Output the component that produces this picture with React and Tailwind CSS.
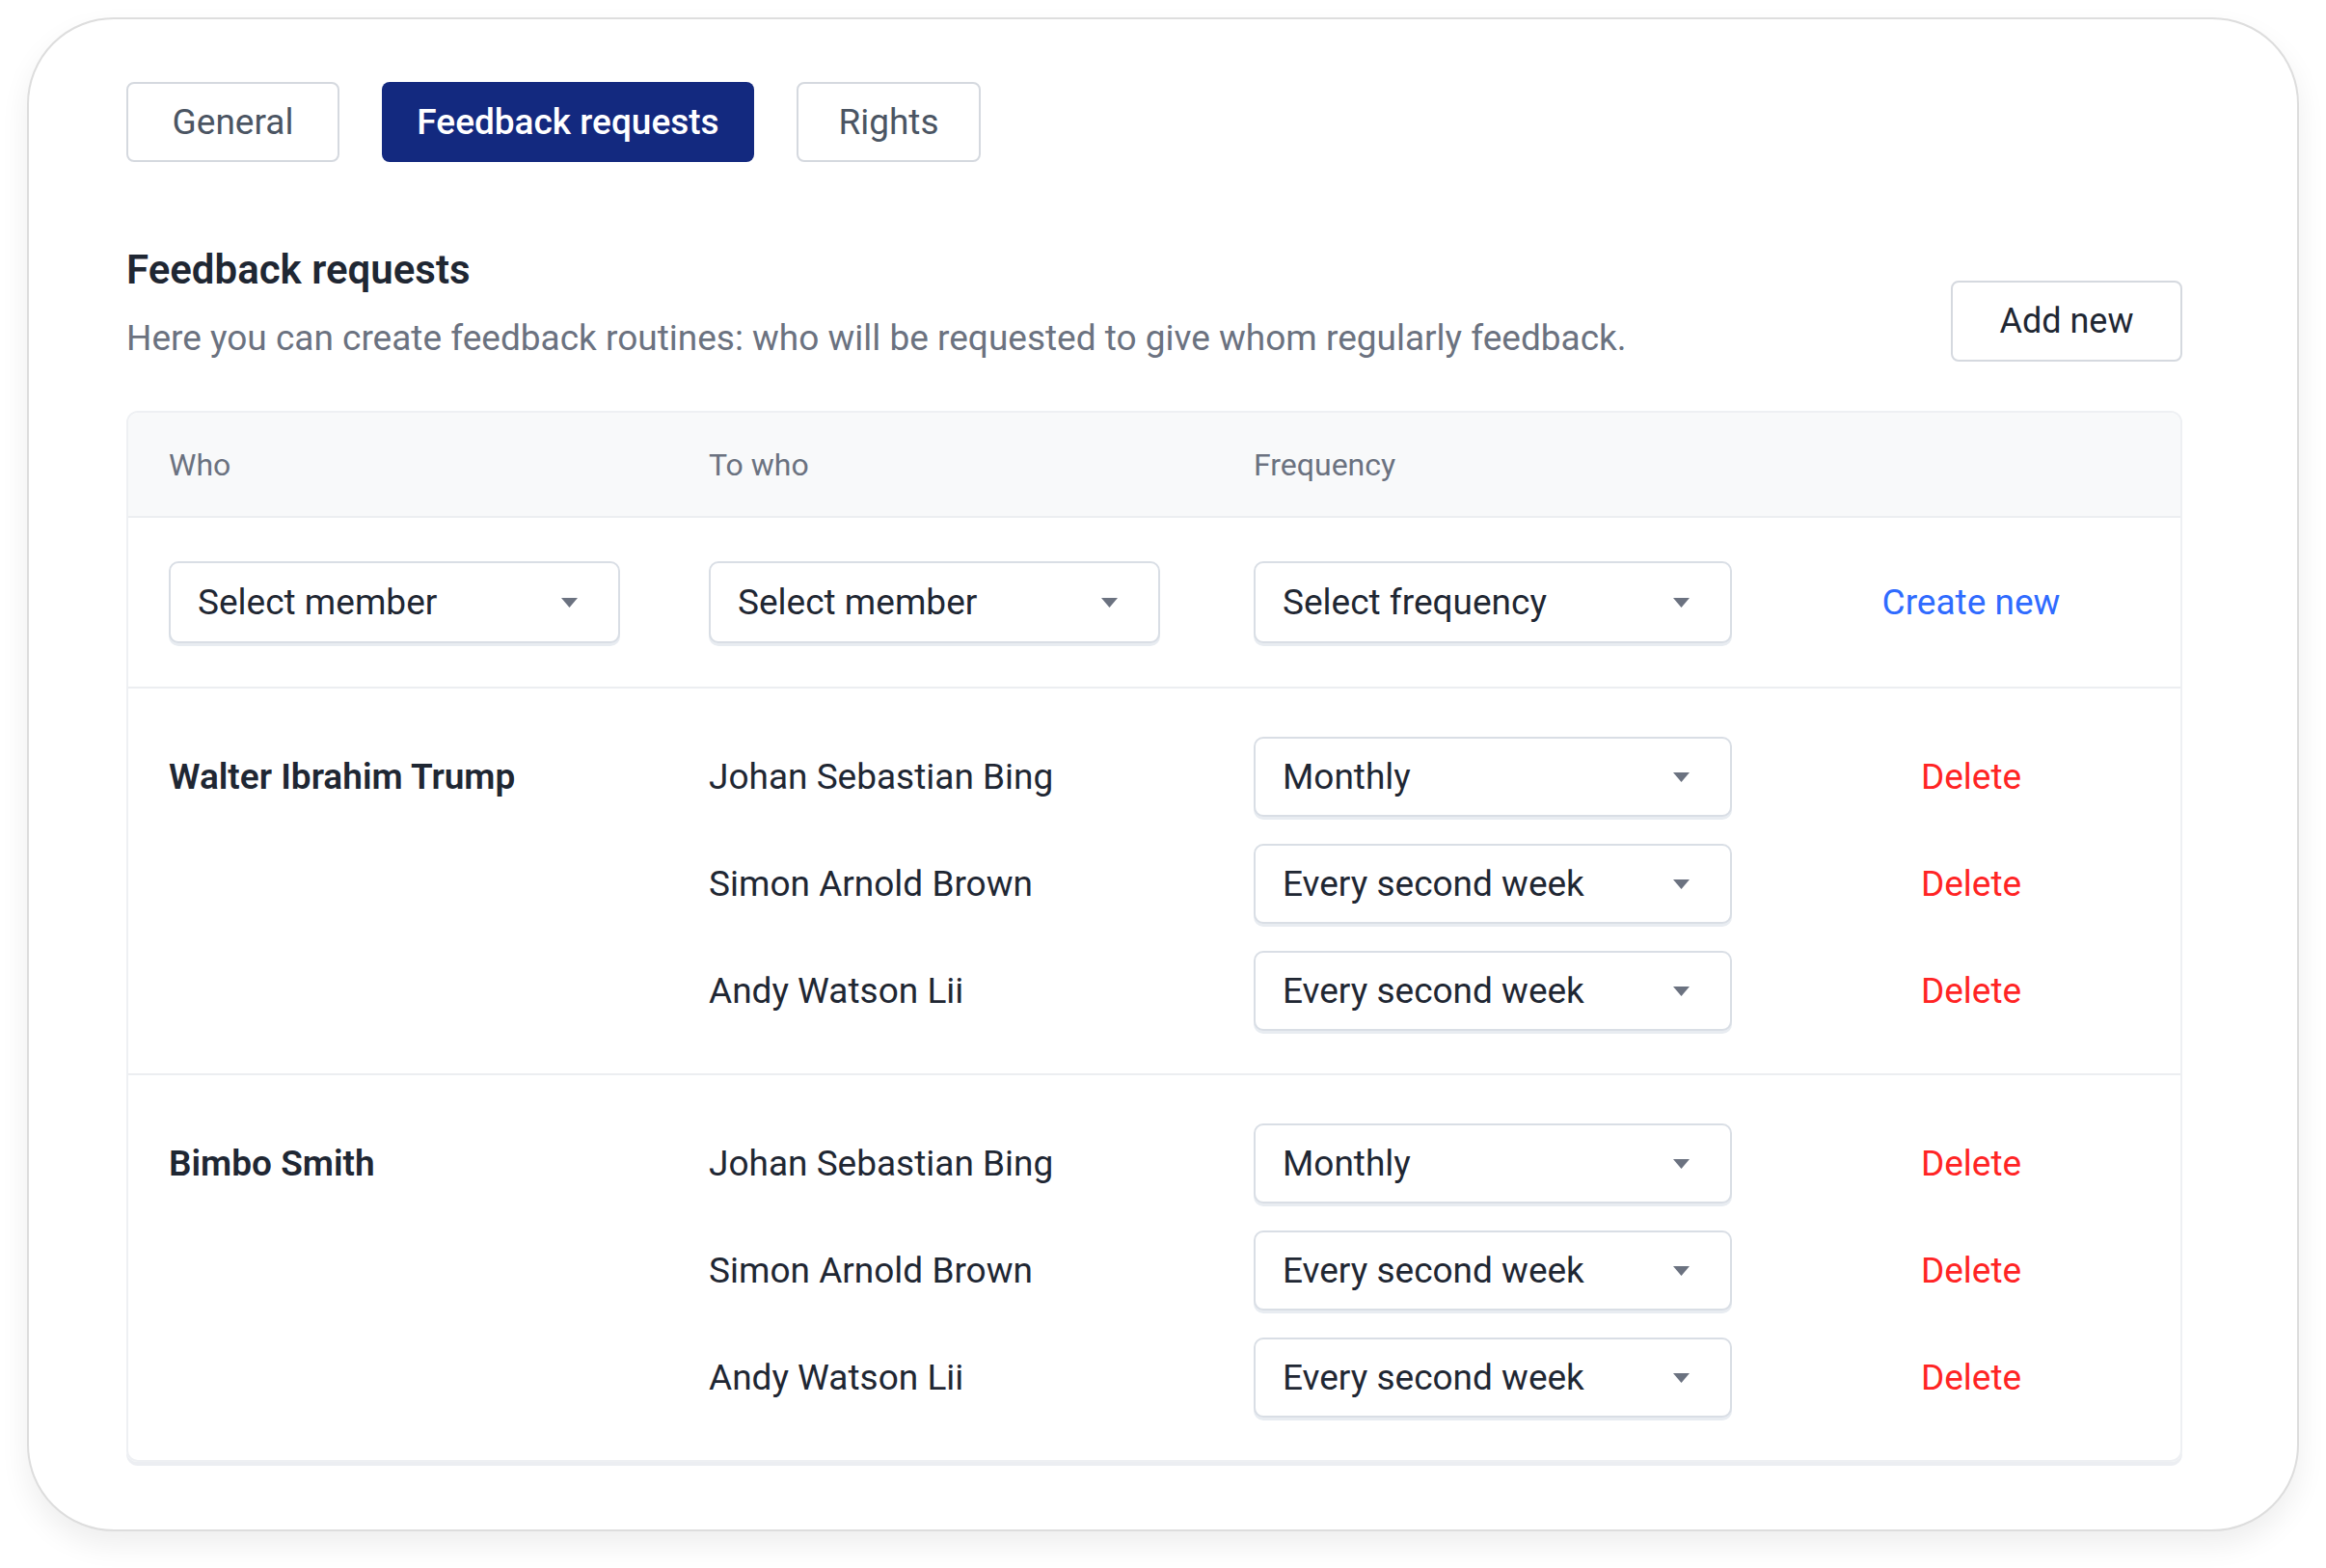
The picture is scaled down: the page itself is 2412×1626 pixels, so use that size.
// Team settings — feedback request routines
const groups = [
  {
    who: 'Walter Ibrahim Trump',
    rows: [
      { to: 'Johan Sebastian Bing', freq: 'Monthly' },
      { to: 'Simon Arnold Brown', freq: 'Every second week' },
      { to: 'Andy Watson Lii', freq: 'Every second week' },
    ],
  },
  {
    who: 'Bimbo Smith',
    rows: [
      { to: 'Johan Sebastian Bing', freq: 'Monthly' },
      { to: 'Simon Arnold Brown', freq: 'Every second week' },
      { to: 'Andy Watson Lii', freq: 'Every second week' },
    ],
  },
]

const tabs = [
  { label: 'General', w: 'w-[221px]' },
  { label: 'Feedback requests', w: 'w-[386px]', active: true },
  { label: 'Rights', w: 'w-[191px]' },
]

function Caret() {
  return (
    <svg width="17" height="10" viewBox="0 0 17 10" className="shrink-0">
      <path d="M0 0h17L8.5 10z" fill="#6b7280" />
    </svg>
  )
}

function Select({ label, className = '' }) {
  return (
    <div className={`flex items-center justify-between rounded-[10px] border-2 border-[#d9dee5] bg-white pl-[28px] pr-[42px] shadow-[0_3px_0_#e8ecf1] ${className}`}>
      <span className="text-[37px] text-[#1f2733]">{label}</span>
      <Caret />
    </div>
  )
}

export default function App() {
  const cols = 'grid grid-cols-[560px_565px_569px_1fr] items-center'

  return (
    <div className="w-[2412px] h-[1626px] bg-white pt-[18px] pl-[28px] font-['Roboto',sans-serif]">
      <div className="w-[2356px] h-[1570px] rounded-[90px] border-2 border-[#dddddd] bg-white pt-[65px] pl-[101px] pr-[119px] shadow-[0_14px_30px_rgba(0,0,0,0.07)]">
        {/* Tabs */}
        <div className="flex gap-[44px]">
          {tabs.map((t) => (
            <div
              key={t.label}
              className={`flex h-[83px] items-center justify-center rounded-[8px] text-[37px] ${t.w} ${t.active ? 'bg-[#13297f] font-medium text-white' : 'border-2 border-[#d5d9df] text-[#4b5563]'}`}
            >
              {t.label}
            </div>
          ))}
        </div>

        {/* Heading */}
        <div className="mt-[88px] flex items-end justify-between">
          <div>
            <h2 className="text-[42px] leading-[48px] font-semibold text-[#1f2733]">Feedback requests</h2>
            <p className="mt-[23px] text-[37px] leading-[48px] text-[#6b7280]">
              Here you can create feedback routines: who will be requested to give whom regularly feedback.
            </p>
          </div>
          <button className="h-[84px] w-[240px] rounded-[8px] border-2 border-[#d5d9df] bg-white text-[36px] text-[#1f2733]">
            Add new
          </button>
        </div>

        {/* Table */}
        <div className="mt-[51px] overflow-hidden rounded-[12px] border-2 border-[#eef0f3] shadow-[0_4px_0_#eceef2]">
          <div className={`${cols} h-[109px] border-b-2 border-[#eceef1] bg-[#f8f9fa] px-[42px] text-[32px] text-[#6b7280]`}>
            <span>Who</span>
            <span>To who</span>
            <span>Frequency</span>
            <span />
          </div>

          <div className={`${cols} border-b-2 border-[#eceef1] px-[42px] py-[45px]`}>
            <Select label="Select member" className="h-[85px] w-[468px]" />
            <Select label="Select member" className="h-[85px] w-[468px]" />
            <Select label="Select frequency" className="h-[85px] w-[496px]" />
            <span className="text-center text-[37px] text-[#2f6bff]">Create new</span>
          </div>

          {groups.map((g, gi) => (
            <div
              key={g.who}
              className={`flex flex-col gap-[28px] px-[42px] pt-[50px] pb-[44px] ${gi < groups.length - 1 ? 'border-b-2 border-[#eceef1]' : ''}`}
            >
              {g.rows.map((r, i) => (
                <div key={r.to} className={cols}>
                  <span className="text-[37px] font-semibold text-[#1f2733]">{i === 0 ? g.who : ''}</span>
                  <span className="text-[37px] text-[#1f2733]">{r.to}</span>
                  <Select label={r.freq} className="h-[83px] w-[496px]" />
                  <span className="text-center text-[37px] text-[#ff2424]">Delete</span>
                </div>
              ))}
            </div>
          ))}
        </div>
      </div>
    </div>
  )
}
